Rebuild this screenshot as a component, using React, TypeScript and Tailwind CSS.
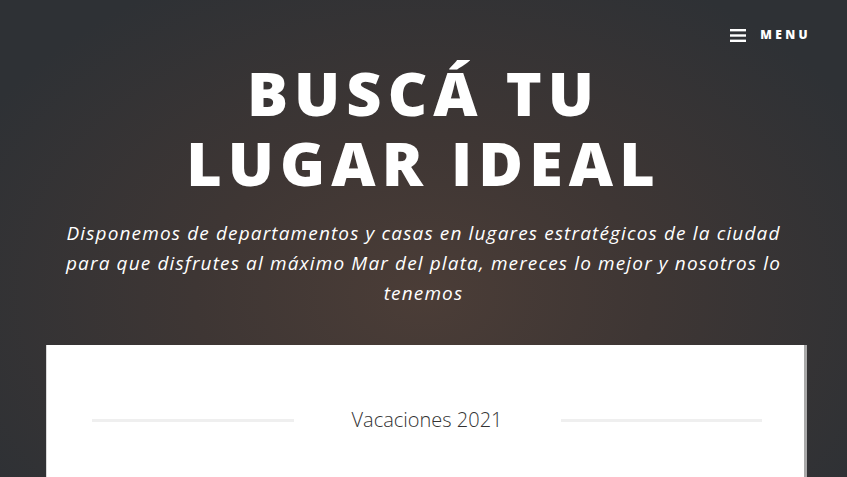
export default function App() {
  return (
    <div
      className="h-[477px] w-full overflow-hidden"
      style={{
        background:
          "radial-gradient(ellipse 60% 75% at 50% 62%, #4b3d37 0%, #3e3634 45%, #2e3135 100%)",
      }}
    >
      <header className="flex justify-end pt-[26px] pr-[36px]">
        <button className="flex items-center gap-[14px] text-white">
          <svg width="16" height="13" viewBox="0 0 16 13" fill="currentColor">
            <rect x="0" y="0" width="16" height="2.4" />
            <rect x="0" y="5.3" width="16" height="2.4" />
            <rect x="0" y="10.6" width="16" height="2.4" />
          </svg>
          <span className="font-['Open_Sans',sans-serif] text-[12px] font-extrabold tracking-[0.28em]">MENU</span>
        </button>
      </header>

      <section className="flex flex-col items-center px-[50px] pt-[14px] text-center">
        <h1 className="font-['Open_Sans',sans-serif] text-[61px] font-extrabold uppercase leading-[70px] tracking-[0.1em] text-white">
          Buscá tu
          <br />
          lugar ideal
        </h1>
        <p className="mt-[20px] max-w-[740px] font-['Open_Sans',sans-serif] text-[19px] italic leading-[30px] tracking-[0.06em] text-white">
          Disponemos de departamentos y casas en lugares estratégicos de la ciudad para que disfrutes al máximo Mar del plata, mereces lo mejor y nosotros lo tenemos
        </p>
      </section>

      <main className="ml-[46px] mr-[40px] mt-[37px] h-[200px] border-l border-r-[3px] border-l-[#d8d8d8] border-r-[#a9a9a9] bg-white">
        <div className="flex items-center gap-[10px] pl-[45px] pr-[42px] pt-[60px]">
          <div className="h-[3px] flex-1 bg-[#efefef]" />
          <h2 className="w-[247px] text-center font-['Open_Sans',sans-serif] text-[20px] font-light text-[#333]">
            Vacaciones 2021
          </h2>
          <div className="h-[3px] flex-1 bg-[#efefef]" />
        </div>
      </main>
    </div>
  );
}
